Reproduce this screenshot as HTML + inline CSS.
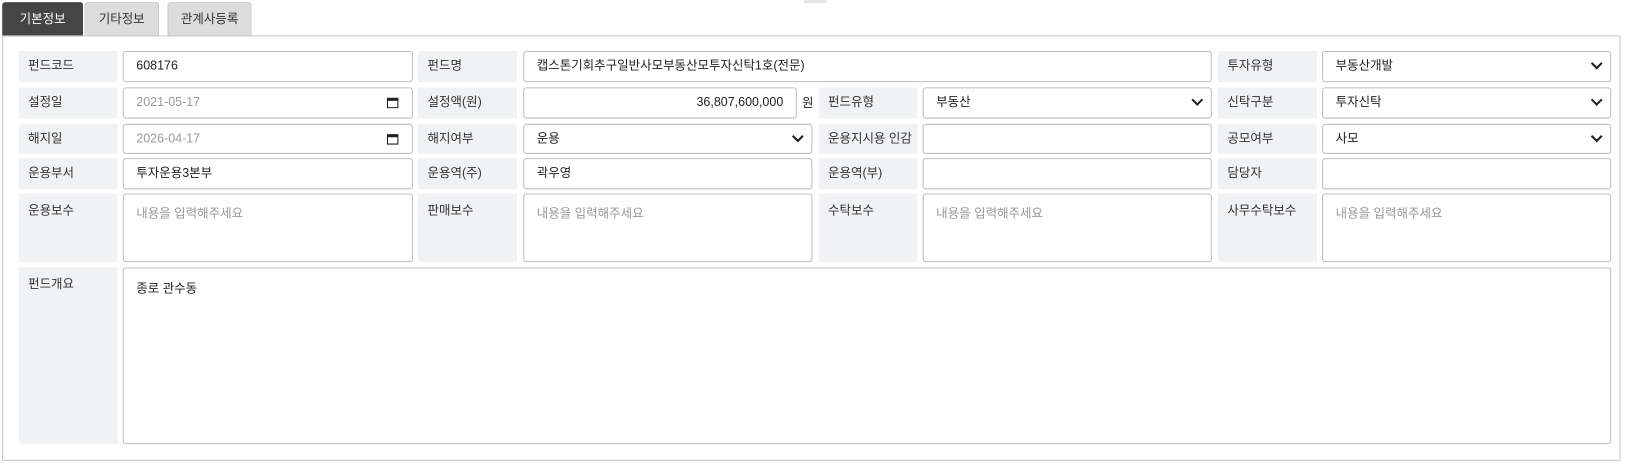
<!DOCTYPE html>
<html><head><meta charset="utf-8"><style>
*{box-sizing:border-box;margin:0;padding:0}
body{width:1631px;height:464px;background:#fff;position:relative;font-family:"Liberation Sans","Noto Sans CJK KR",sans-serif;font-size:12px;color:#222;overflow:hidden}
#w{position:absolute;left:0;top:0;width:1568px;height:446px;transform:scale(1.0402);transform-origin:0 0}
.a{position:absolute}
.tab{position:absolute;top:2px;height:33px;border:1px solid #c8c8c8;border-bottom:none;border-radius:3px 3px 0 0;background:#dcdcdc;color:#333;font-size:12px;line-height:31px;text-align:center}
.tab.on{background:#454545;color:#fff;border-color:#454545}
.panel{position:absolute;left:2px;top:34px;width:1556px;height:409px;border:1px solid #c8c8c8}
.l{position:absolute;background:#f1f2f4;color:#333;padding-left:9px;line-height:29px;font-size:12px}
.i{position:absolute;border:1px solid #bdbdbd;border-radius:3px;background:#fff;padding-left:12px;line-height:27px;font-size:12px;color:#222}
.g{color:#999}
.ph{color:#999;line-height:normal;padding-top:9px}
.chev{position:absolute;right:9px;top:10px;width:8px;height:8px;border-right:2px solid #222;border-bottom:2px solid #222;transform:rotate(45deg) translate(-2px,-2px)}
.cal{position:absolute;right:13px;top:9px;width:11px;height:10px;border:1.5px solid #222;border-top-width:3px}
</style></head><body><div id="w">
<div class="a" style="left:773px;top:0;width:22px;height:3px;background:#e6e6e6"></div>
<div class="tab on" style="left:2px;width:78px">기본정보</div>
<div class="tab" style="left:81px;width:72px">기타정보</div>
<div class="tab" style="left:161px;width:81px">관계사등록</div>
<div class="panel"></div>

<div class="l" style="left:18px;top:49px;width:95px;height:30px">펀드코드</div>
<div class="i" style="left:118px;top:49px;width:279px;height:30px">608176</div>
<div class="l" style="left:402px;top:49px;width:95px;height:30px">펀드명</div>
<div class="i" style="left:503px;top:49px;width:662px;height:30px">캡스톤기회추구일반사모부동산모투자신탁1호(전문)</div>
<div class="l" style="left:1171px;top:49px;width:95px;height:30px">투자유형</div>
<div class="i" style="left:1271px;top:49px;width:278px;height:30px">부동산개발<span class="chev"></span></div>

<div class="l" style="left:18px;top:84px;width:95px;height:30px">설정일</div>
<div class="i g" style="left:118px;top:84px;width:279px;height:30px">2021-05-17<span class="cal"></span></div>
<div class="l" style="left:402px;top:84px;width:95px;height:30px">설정액(원)</div>
<div class="i" style="left:503px;top:84px;width:263px;height:30px;text-align:right;padding-right:12px">36,807,600,000</div>
<div class="a" style="left:771px;top:84px;line-height:30px">원</div>
<div class="l" style="left:787px;top:84px;width:95px;height:30px">펀드유형</div>
<div class="i" style="left:887px;top:84px;width:278px;height:30px">부동산<span class="chev"></span></div>
<div class="l" style="left:1171px;top:84px;width:95px;height:30px">신탁구분</div>
<div class="i" style="left:1271px;top:84px;width:278px;height:30px">투자신탁<span class="chev"></span></div>

<div class="l" style="left:18px;top:119px;width:95px;height:29px">해지일</div>
<div class="i g" style="left:118px;top:119px;width:279px;height:29px">2026-04-17<span class="cal"></span></div>
<div class="l" style="left:402px;top:119px;width:95px;height:29px">해지여부</div>
<div class="i" style="left:503px;top:119px;width:278px;height:29px">운용<span class="chev"></span></div>
<div class="l" style="left:787px;top:119px;width:95px;height:29px">운용지시용 인감</div>
<div class="i" style="left:887px;top:119px;width:278px;height:29px"></div>
<div class="l" style="left:1171px;top:119px;width:95px;height:29px">공모여부</div>
<div class="i" style="left:1271px;top:119px;width:278px;height:29px">사모<span class="chev"></span></div>

<div class="l" style="left:18px;top:152px;width:95px;height:30px">운용부서</div>
<div class="i" style="left:118px;top:152px;width:279px;height:30px">투자운용3본부</div>
<div class="l" style="left:402px;top:152px;width:95px;height:30px">운용역(주)</div>
<div class="i" style="left:503px;top:152px;width:278px;height:30px">곽우영</div>
<div class="l" style="left:787px;top:152px;width:95px;height:30px">운용역(부)</div>
<div class="i" style="left:887px;top:152px;width:278px;height:30px"></div>
<div class="l" style="left:1171px;top:152px;width:95px;height:30px">담당자</div>
<div class="i" style="left:1271px;top:152px;width:278px;height:30px"></div>

<div class="l" style="left:18px;top:186px;width:95px;height:66px;line-height:normal;padding-top:7px">운용보수</div>
<div class="i ph" style="left:118px;top:186px;width:279px;height:66px">내용을 입력해주세요</div>
<div class="l" style="left:402px;top:186px;width:95px;height:66px;line-height:normal;padding-top:7px">판매보수</div>
<div class="i ph" style="left:503px;top:186px;width:278px;height:66px">내용을 입력해주세요</div>
<div class="l" style="left:787px;top:186px;width:95px;height:66px;line-height:normal;padding-top:7px">수탁보수</div>
<div class="i ph" style="left:887px;top:186px;width:278px;height:66px">내용을 입력해주세요</div>
<div class="l" style="left:1171px;top:186px;width:95px;height:66px;line-height:normal;padding-top:7px">사무수탁보수</div>
<div class="i ph" style="left:1271px;top:186px;width:278px;height:66px">내용을 입력해주세요</div>

<div class="l" style="left:18px;top:257px;width:95px;height:170px;line-height:normal;padding-top:7px">펀드개요</div>
<div class="i" style="left:118px;top:257px;width:1431px;height:170px;line-height:normal;padding-top:10px">종로 관수동</div>
</div></body></html>
